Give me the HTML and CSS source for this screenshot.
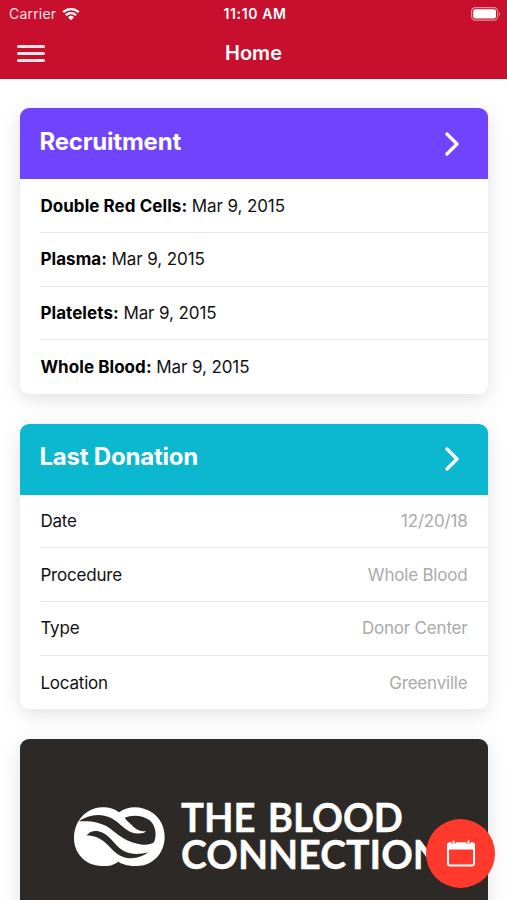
FILE: index.html
```html
<!DOCTYPE html>
<html lang="en">
<head>
  <meta charset="UTF-8" />
  <meta name="viewport" content="width=device-width, initial-scale=1" />
  <title>Home</title>
  <link rel="stylesheet" href="styles.css">
</head>
<body>
  <header class="header">
    <div class="status-bar">
      <div class="carrier">
        <span>Carrier</span>
        <svg class="wifi" viewBox="0 0 18 14" width="18" height="14">
          <path d="M1.2 5.2 A11.5 11.5 0 0 1 16.8 5.2" />
          <path d="M3.9 8.1 A7.4 7.4 0 0 1 14.1 8.1" />
          <path class="dot" d="M9 13.3 L6 10.3 A4.3 4.3 0 0 1 12 10.3 Z" />
        </svg>
      </div>
      <span class="time">11:10 AM</span>
      <svg class="battery" viewBox="0 0 30 14" width="30" height="14">
        <rect class="outline" x="0.6" y="0.6" width="26" height="12.6" rx="3.6" />
        <rect class="charge" x="2.2" y="2.2" width="22.8" height="9.4" rx="2" />
        <path class="cap" d="M28 4.8 Q30 7 28 9.2 Z" />
      </svg>
    </div>
    <nav class="nav-bar">
      <button class="menu-button" type="button" aria-label="Menu">
        <span></span>
        <span></span>
        <span></span>
      </button>
      <h1>Home</h1>
    </nav>
  </header>

  <main class="content">
    <section class="card">
      <div class="card-header recruitment">
        <h2>Recruitment</h2>
        <svg class="chevron" viewBox="0 0 14 24" width="14" height="24"><path d="M2 2 L12 12 L2 22" /></svg>
      </div>
      <ul class="list">
        <li><p><b>Double Red Cells:</b> Mar 9, 2015</p></li>
        <li><p><b>Plasma:</b> Mar 9, 2015</p></li>
        <li><p><b>Platelets:</b> Mar 9, 2015</p></li>
        <li><p><b>Whole Blood:</b> Mar 9, 2015</p></li>
      </ul>
    </section>

    <section class="card">
      <div class="card-header donation">
        <h2>Last Donation</h2>
        <svg class="chevron" viewBox="0 0 14 24" width="14" height="24"><path d="M2 2 L12 12 L2 22" /></svg>
      </div>
      <ul class="list">
        <li><span>Date</span><span class="value">12/20/18</span></li>
        <li><span>Procedure</span><span class="value">Whole Blood</span></li>
        <li><span>Type</span><span class="value">Donor Center</span></li>
        <li><span>Location</span><span class="value">Greenville</span></li>
      </ul>
    </section>

    <section class="card brand">
      <svg class="brand-mark" viewBox="42 52 273 180" width="91" height="60">
        <path class="shape" d="M177 68 C200 52 225 49 252 57 C292 69 314 102 314 142 C314 190 279 229 230 229 C209 229 190 226 175 216 C160 227 145 230 125 229 C76 229 42 190 42 146 C42 96 76 55 126 53 C145 52 162 56 177 68 Z" />
        <path class="wave" d="M56 95 C86 73 125 69 157 87 C184 103 199 127 225 131 C242 133 253 131 258 125 C234 126 222 113 211 102 C204 96 199 91 194 84 C215 75 246 75 268 91 C288 107 291 138 282 158 C271 167 247 168 224 160 C190 151 172 132 147 114 C121 98 95 93 56 95 Z" />
        <path class="wave" d="M80 137 C91 124 108 120 128 129 C154 141 168 172 193 185 C216 196 241 194 265 188 C244 204 216 211 188 201 C160 190 146 163 124 150 C110 141 98 138 80 137 Z" />
      </svg>
      <svg class="brand-name" viewBox="0 0 270 90" width="270" height="90">
        <text x="0" y="45" textLength="222" lengthAdjust="spacingAndGlyphs">THE BLOOD</text>
        <text x="0" y="82" textLength="262" lengthAdjust="spacingAndGlyphs">CONNECTION</text>
      </svg>
    </section>
  </main>

  <button class="calendar-button" type="button" aria-label="Appointments">
    <svg viewBox="0 0 28 27" width="28" height="27">
      <rect class="frame" x="1" y="3.5" width="26" height="22" rx="2" />
      <path class="top" d="M0 5 Q0 2.5 2.5 2.5 H25.5 Q28 2.5 28 5 V9.5 H0 Z" />
      <path class="ring-gap" d="M6.5 0 V3.5 M21.5 0 V3.5" />
      <path class="ring" d="M6.5 0.5 V3.5 M21.5 0.5 V3.5" />
    </svg>
  </button>
</body>
</html>
```
FILE: styles.css
```css
* {
  box-sizing: border-box;
}

body {
  margin: 0;
  height: 900px;
  overflow: hidden;
  background-color: #fff;
  color: #111;
  font-family: Inter, "Liberation Sans", sans-serif;
}

h1,
h2,
p,
ul {
  margin: 0;
  padding: 0;
}

button {
  border: none;
  padding: 0;
  cursor: pointer;
}

/* Header */

.header {
  height: 79px;
  background-color: #c8102e;
  color: #fff;
}

.status-bar {
  display: grid;
  grid-template-columns: 1fr auto 1fr;
  align-items: center;
  height: 27px;
  padding: 0 6px 0 9px;
  font-size: 14px;
}

.carrier {
  display: flex;
  align-items: center;
  gap: 6px;
  color: #fbe3e7;
  letter-spacing: 0.2px;
}

.wifi path {
  fill: none;
  stroke: #fff;
  stroke-width: 2.3;
}

.wifi .dot {
  fill: #fff;
  stroke: none;
}

.time {
  font-weight: 600;
  font-size: 14px;
  letter-spacing: 0.6px;
}

.battery {
  justify-self: end;
}

.battery .outline {
  fill: none;
  stroke: #e68c9b;
  stroke-width: 1.2;
}

.battery .charge {
  fill: #fff;
}

.battery .cap {
  fill: #e68c9b;
}

.nav-bar {
  display: grid;
  grid-template-columns: 1fr auto 1fr;
  align-items: center;
  height: 52px;
  padding: 0 17px;
}

.nav-bar h1 {
  font-size: 20px;
  font-weight: 600;
}

.menu-button {
  display: flex;
  flex-direction: column;
  gap: 4px;
  width: 28px;
  background: none;
}

.menu-button span {
  height: 3px;
  border-radius: 2px;
  background-color: #fbe3e7;
}

/* Cards */

.content {
  display: flex;
  flex-direction: column;
  gap: 29.5px;
  padding: 29.4px 19.5px 0 20.4px;
}

.card {
  border-radius: 9px;
  background-color: #fff;
  box-shadow: 0 5px 20px rgba(0, 0, 0, 0.12);
}

.card-header {
  display: flex;
  justify-content: space-between;
  align-items: center;
  height: 71px;
  padding: 0 29px 0 19px;
  border-radius: 9px 9px 0 0;
  color: #fff;
}

.card-header h2 {
  margin-bottom: 5px;
  font-size: 24px;
  font-weight: 700;
  letter-spacing: -0.2px;
}

.recruitment {
  background-color: #7044ff;
}

.donation {
  background-color: #0bb8cf;
}

.chevron path {
  fill: none;
  stroke: #fff;
  stroke-width: 3.3;
  stroke-linecap: round;
  stroke-linejoin: round;
}

.list {
  padding-left: 20px;
  list-style: none;
}

.list li {
  display: flex;
  justify-content: space-between;
  align-items: center;
  height: 53.7px;
  padding-right: 20px;
  border-bottom: 1px solid #e6e6e6;
  font-size: 17px;
  letter-spacing: -0.2px;
}

.list li:last-child {
  border-bottom: none;
}

.list p {
  letter-spacing: -0.1px;
}

.list b {
  font-weight: 700;
  color: #000;
  letter-spacing: 0.06px;
}

.value {
  color: #aaa;
}

/* Brand banner */

.brand {
  display: flex;
  align-items: flex-start;
  gap: 16px;
  height: 190px;
  padding: 68px 0 0 54px;
  background-color: #2d2926;
  overflow: hidden;
}

.brand-mark,
.brand-name {
  flex: none;
}

.brand-name {
  margin-top: -20px;
  font-family: Lato, sans-serif;
  font-size: 39.5px;
  font-weight: 700;
  word-spacing: 3px;
}

.brand-name text {
  fill: #fff;
  stroke: #fff;
  stroke-width: 0.4;
}

.brand-mark .shape {
  fill: #fff;
}

.brand-mark .wave {
  fill: #2d2926;
}

/* Floating button */

.calendar-button {
  position: fixed;
  right: 12px;
  bottom: 12px;
  display: flex;
  justify-content: center;
  align-items: center;
  width: 69px;
  height: 69px;
  border-radius: 50%;
  background-color: #ff3a2d;
}

.calendar-button .frame {
  fill: none;
  stroke: #fff;
  stroke-width: 2;
}

.calendar-button .top {
  fill: #fff;
}

.calendar-button .ring-gap {
  stroke: #ff3a2d;
  stroke-width: 4.5;
}

.calendar-button .ring {
  stroke: #fff;
  stroke-width: 2;
}
```
